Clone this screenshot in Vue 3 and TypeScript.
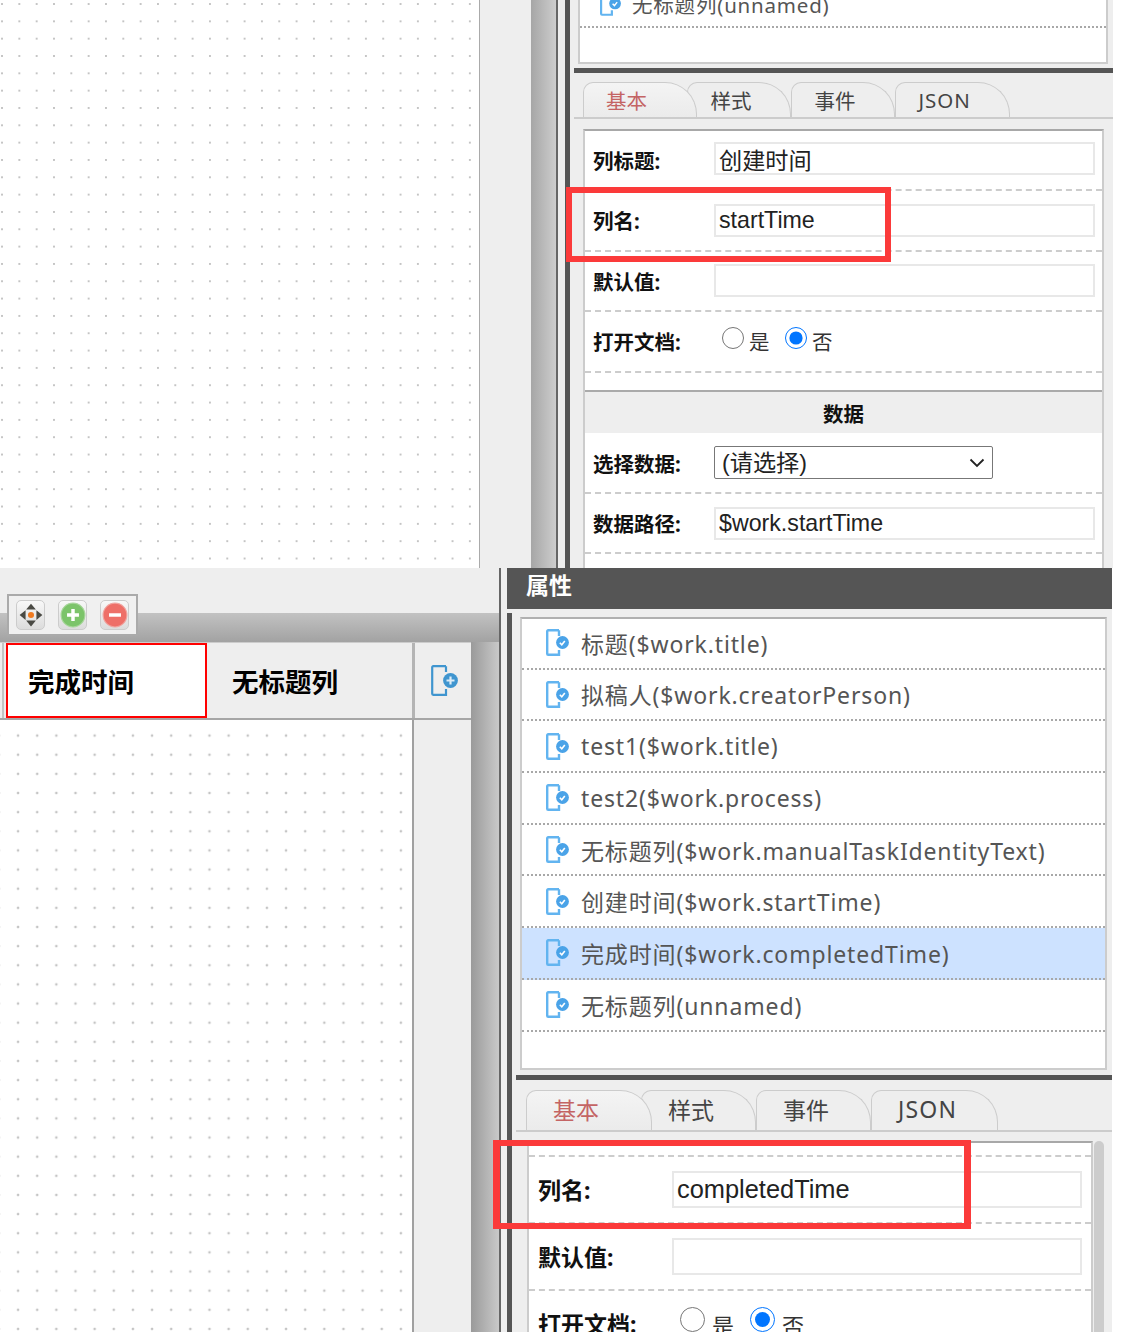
<script setup lang="ts">
const topRows = ['标题($work.title)', '拟稿人($work.creatorPerson)', 'test1($work.title)', 'test2($work.process)', '无标题列($work.manualTaskIdentityText)', '创建时间($work.startTime)', '完成时间($work.completedTime)', '无标题列(unnamed)']
const selectedRow = 6
const tabs = ['基本', '样式', '事件', 'JSON']
</script>

<template>
  <div class="page">
    <section class="a">
      <div class="a-canvas"></div>
      <div class="a-gap"></div>
      <div class="a-shade"></div>
      <div class="a-strip"></div>
      <div class="a-vbar"></div>
      <div class="a-main">
        <div class="list">
          <div class="item first">
            <svg class="doc" viewBox="0 0 23 27"><path d="M13 1.2H2.2a1 1 0 0 0-1 1V24.8a1 1 0 0 0 1 1H13V21M13 1.2V7" fill="none" stroke="#62b4f0" stroke-width="2.4"/><circle cx="16.5" cy="13.5" r="6.4" fill="#4aa3e8"/><path d="M13.8 13.8l2 2 3-3.8" fill="none" stroke="#fff" stroke-width="1.6"/></svg>
            <span>无标题列(unnamed)</span>
          </div>
        </div>
        <div class="bar"></div>
        <div class="tabs">
          <div v-for="(t, i) in tabs" :key="t" class="tab" :class="{ on: i === 0 }" :style="{ zIndex: 9 - i }">{{ t }}</div>
        </div>
        <div class="form">
          <div class="row"><label>列标题:</label><input value="创建时间" readonly /></div>
          <div class="row"><label>列名:</label><input value="startTime" readonly /></div>
          <div class="row"><label>默认值:</label><input value="" readonly /></div>
          <div class="row">
            <label>打开文档:</label>
            <div class="radios">
              <input type="radio" name="a-open" /><span>是</span>
              <input type="radio" name="a-open" checked /><span>否</span>
            </div>
          </div>
          <div class="head">数据</div>
          <div class="row">
            <label>选择数据:</label>
            <div class="sel-wrap">
              <select><option>(请选择)</option></select>
              <svg class="chev" viewBox="0 0 16 10" width="16" height="10"><path d="M1.5 1.5L8 8l6.5-6.5" fill="none" stroke="#222" stroke-width="1.8"/></svg>
            </div>
          </div>
          <div class="row"><label>数据路径:</label><input value="$work.startTime" readonly /></div>
        </div>
      </div>
      <div class="mark mark-a"></div>
    </section>

    <section class="b">
      <div class="b-left">
        <div class="b-band"></div>
        <div class="b-stage">
          <div class="panel">
            <div class="p-tabs">
              <div class="p-stub"></div>
              <div class="p-cell sel">完成时间</div>
              <div class="p-cell">无标题列</div>
              <div class="p-add">
                <svg viewBox="0 0 27 31" width="27" height="31"><path d="M15 1.2H2.2a1 1 0 0 0-1 1V28.8a1 1 0 0 0 1 1H15V24M15 1.2V7" fill="none" stroke="#3f95cf" stroke-width="2.2"/><circle cx="19.5" cy="15.5" r="7.4" fill="#3f95cf"/><path d="M15.5 15.5h8M19.5 11.5v8" stroke="#dcecf7" stroke-width="2.2"/></svg>
              </div>
            </div>
            <div class="p-body">
              <div class="p-canvas"></div>
              <div class="p-side"></div>
            </div>
          </div>
          <div class="b-shade"></div>
        </div>
        <div class="tools">
          <button class="tool">
            <svg viewBox="0 0 24 24" width="26" height="26"><path d="M12 1.5l4.5 5.5h-9zM12 22.5L7.500 17h9zM1.500 12L7 7.500v9zM22.500 12L17 16.500v-9z" fill="#4a4a44"/><circle cx="12" cy="12" r="2.8" fill="#f07a20"/></svg>
          </button>
          <button class="tool">
            <svg viewBox="0 0 24 24" width="26" height="26"><circle cx="12" cy="12" r="11" fill="#7cc46a" stroke="#a8d69b"/><path d="M12 6.500v11M6.500 12h11" stroke="#fff" stroke-width="3.200"/></svg>
          </button>
          <button class="tool">
            <svg viewBox="0 0 24 24" width="26" height="26"><circle cx="12" cy="12" r="11" fill="#ee6f68" stroke="#f0a5a0"/><path d="M6.500 12h11" stroke="#fff" stroke-width="3.200"/></svg>
          </button>
        </div>
      </div>
      <div class="b-right">
        <div class="title">属性</div>
        <div class="b-under">
          <div class="b-vbar"></div>
          <div class="b-main">
            <div class="list">
              <div v-for="(r, i) in topRows" :key="r" class="item" :class="{ cur: i === selectedRow }">
                <svg class="doc" viewBox="0 0 23 27"><path d="M13 1.2H2.2a1 1 0 0 0-1 1V24.8a1 1 0 0 0 1 1H13V21M13 1.2V7" fill="none" stroke="#62b4f0" stroke-width="2.4"/><circle cx="16.5" cy="13.5" r="6.4" fill="#4aa3e8"/><path d="M13.8 13.8l2 2 3-3.8" fill="none" stroke="#fff" stroke-width="1.6"/></svg>
                <span>{{ r }}</span>
              </div>
            </div>
            <div class="bar"></div>
            <div class="tabs">
              <div v-for="(t, i) in tabs" :key="t" class="tab" :class="{ on: i === 0 }" :style="{ zIndex: 9 - i }">{{ t }}</div>
            </div>
            <div class="form-wrap">
              <div class="form">
                <div class="row stub"></div>
                <div class="row"><label>列名:</label><input value="completedTime" readonly /></div>
                <div class="row"><label>默认值:</label><input value="" readonly /></div>
                <div class="row">
                  <label>打开文档:</label>
                  <div class="radios">
                    <input type="radio" name="b-open" /><span>是</span>
                    <input type="radio" name="b-open" checked /><span>否</span>
                  </div>
                </div>
              </div>
              <div class="scroll"></div>
            </div>
          </div>
        </div>
      </div>
      <div class="mark mark-b"></div>
    </section>
  </div>
</template>

<style scoped>
.page {
  width: 1125px;
  height: 1332px;
  overflow: hidden;
  background: #fff;
  font-family: "Noto Sans", "Noto Sans CJK SC", sans-serif;
  color: #222;
}
section { position: relative; display: flex; overflow: hidden; }
.a { height: 568px; }
.b { height: 764px; }

/* top shot */
.a-canvas {
  width: 479px;
  flex: none;
  border-right: 1.5px solid #aaa;
  background-color: #fff;
  background-image: radial-gradient(circle, #c4c4c4 0 1.1px, transparent 1.5px);
  background-size: 17.33px 17.33px;
  background-position: -6.67px -4.67px;
}
.a-gap { width: 51px; flex: none; background: #eee; }
.a-shade { width: 25px; flex: none; background: linear-gradient(90deg, #a6a6a6, #cdcdcd); border-right: 2px solid #666; }
.a-strip { width: 7px; flex: none; background: #eee; }
.a-vbar { width: 5px; flex: none; background: #555; }
.a-main { width: 542.5px; flex: none; background: #eee; }
.a-main .list { margin-left: 8px; width: 530px; height: 64px; border-top: 0; }
.a-main .item { height: 46.6px; margin-top: -18.6px; padding-left: 20px; font-size: 20.5px; letter-spacing: 0.8px; }
.a-main .doc { width: 21px; height: 25px; margin-right: 11px; }
.a-main .bar { margin: 4px 0 0 4px; height: 5px; }
.a-main .tabs { margin-left: 4px; height: 44px; padding-left: 9px; }
.a-main .tab { width: 114px; height: 35px; font-size: 20.5px; padding-left: 22px; margin-right: -10.5px; }
.a-main .tab:nth-child(n + 2) { width: 104px; padding-left: 23px; margin-right: 0; }
.a-main .tab:last-child { width: 115px; letter-spacing: 1px; }
.a-main .form { margin: 9.500px 0 0 13px; width: 521px; height: 440px; }
.a-main .row { height: 60.6px; padding-left: 8px; }
.a-main .row:first-child { height: 60.5px; }
.a-main .row:first-child input { margin-top: -2px; }
.a-main label { width: 121px; font-size: 20.5px; }
.a-main input:not([type]) { width: 381px; height: 33px; font-size: 23.2px; }
.a-main .head { height: 43.5px; margin-top: 17px; font-size: 20.5px; }
.a-main select { width: 279px; height: 33px; font-size: 23.2px; }
.a-main .radios input { width: 22px; height: 22px; margin: -6px 5px 0 8px; }
.a-main .radios span { font-size: 20.5px; width: 28px; }

.bar { background: #555; }
.list {
  background: #fff;
  border: 2px solid #ccc;
  box-sizing: border-box;
  overflow: hidden;
}
.item {
  display: flex;
  align-items: center;
  box-sizing: border-box;
  border-bottom: 2px dotted #a8a8a8;
  color: #555;
  white-space: nowrap;
}
.item.cur { background: #cde2ff; }
.doc { flex: none; }
.tabs {
  display: flex;
  align-items: flex-end;
  box-sizing: content-box;
  border-bottom: 2px solid #ccc;
  overflow: hidden;
}
.tab {
  position: relative;
  box-sizing: border-box;
  display: flex;
  align-items: center;
  flex: none;
  background: #eee;
  color: #444;
  border: 1.5px solid #ccc;
  border-bottom: 0;
  border-radius: 10px 32px 0 0 / 10px 32px 0 0;
}
.tab.on { color: #c46464; background: linear-gradient(#f4f4f4, #ebebeb); }

.form {
  background: #fff;
  box-sizing: border-box;
  border: 2px solid #ccc;
  border-top-color: #a8a8a8;
  border-bottom: 0;
  overflow: hidden;
}
.row {
  display: flex;
  align-items: center;
  box-sizing: border-box;
  border-bottom: 2px dashed #ccc;
}
label { flex: none; font-weight: 700; color: #111; }
.form input:not([type]) {
  box-sizing: border-box;
  border: 2px solid #e8e8e8;
  background: #fff;
  padding: 0 3px;
  margin: 0;
  outline: 0;
  color: #222;
  font-family: "Liberation Sans", "Noto Sans CJK SC", sans-serif;
}
.sel-wrap { position: relative; display: flex; }
select {
  appearance: none;
  box-sizing: border-box;
  border: 1.5px solid #777;
  border-radius: 2px;
  background: #fff;
  color: #222;
  padding: 0 7px;
  font-family: "Liberation Sans", "Noto Sans CJK SC", sans-serif;
}
.chev { position: absolute; right: 8px; top: 12px; pointer-events: none; }
.radios { display: flex; align-items: center; }
.radios span { flex: none; color: #333; }
.head {
  box-sizing: border-box;
  display: flex;
  align-items: center;
  justify-content: center;
  background: #eee;
  border-top: 2px solid #aaa;
  font-weight: 700;
  color: #111;
}

.mark {
  position: absolute;
  box-sizing: border-box;
  border: 6px solid #fb3a3a;
  pointer-events: none;
}
.mark-a { left: 566px; top: 187px; width: 325px; height: 75px; }
.mark-b { left: 493px; top: 572px; width: 478px; height: 89px; border-width: 6px 7px; }

/* bottom shot */
.b-left { position: relative; width: 499px; border-right: 2px solid #666; display: flex; flex-direction: column; flex: none; }
.b-band { height: 45px; background: #eee; flex: none; }
.b-stage {
  flex: 1;
  display: flex;
  padding-top: 29px;
  background: linear-gradient(#c2c2c2, #a2a2a2 29px, #a2a2a2);
  min-height: 0;
}
.panel { width: 471px; flex: none; display: flex; flex-direction: column; }
.b-shade { flex: 1; margin-top: -29px; background: linear-gradient(90deg, #9a9a9a, #c9c9c9); clip-path: inset(29px 0 0 0); }
.p-tabs { display: flex; height: 78px; box-sizing: border-box; background: #eee; border-bottom: 2px solid #a6a6a6; border-top: 1px solid #ccc; flex: none; }
.p-stub { width: 2px; border-right: 2px solid #c4c4c4; margin-right: 2px; }
.p-cell {
  box-sizing: border-box;
  width: 205px;
  display: flex;
  align-items: center;
  padding-left: 25px;
  font-size: 26.5px;
  font-weight: 700;
  color: #000;
}
.p-cell.sel { width: 201px; padding-left: 20px; background: #fff; border: 2px solid #f00; }
.p-add { flex: 1; display: flex; align-items: center; padding-left: 16px; border-left: 3px solid #b4b4b4; }
.p-body { flex: 1; display: flex; min-height: 0; }
.p-canvas {
  width: 411.5px;
  flex: none;
  background-color: #fff;
  background-image: radial-gradient(circle, #c4c4c4 0 1.2px, transparent 1.6px);
  background-size: 19.15px 19.15px;
  background-position: 8.5px 6px;
  border-right: 2px solid #a0a0a0;
}
.p-side { flex: 1; background: #eee; }
.tools {
  position: absolute;
  left: 7px;
  top: 26px;
  width: 131px;
  height: 42px;
  box-sizing: border-box;
  display: flex;
  gap: 13px;
  align-items: center;
  padding-left: 7px;
  background: #f0f0f0;
  border: 2px solid #aaa;
}
.tool {
  width: 29px;
  height: 30px;
  padding: 0;
  display: flex;
  align-items: center;
  justify-content: center;
  border: 1px solid #ccc;
  border-radius: 5px;
  background: linear-gradient(#f8f8f8, #dcdcdc);
}

.b-right { width: 611px; padding-left: 6px; box-sizing: border-box; flex: none; display: flex; flex-direction: column; background: #eee; }
.title {
  flex: none;
  height: 41px;
  margin-bottom: 4px;
  padding: 0 0 9px 19px;
  box-sizing: border-box;
  display: flex;
  align-items: center;
  background: #555;
  color: #fff;
  font-size: 23px;
  font-weight: 700;
}
.b-under { flex: 1; display: flex; min-height: 0; }
.b-vbar { width: 5px; flex: none; background: #555; }
.b-main { flex: 1; min-width: 0; display: flex; flex-direction: column; }
.b-main .list { flex: none; margin: 4px 0 0 8px; width: 587px; height: 453px; border-top-color: #b0b0b0; }
.b-main .item { height: 51.72px; padding-left: 24px; font-size: 23px; letter-spacing: 0.86px; }
.b-main .item:first-child { margin-top: -1.2px; }
.b-main .doc { width: 23px; height: 27px; margin-right: 12px; }
.b-main .bar { flex: none; margin: 5px 0 0 4px; height: 5px; }
.b-main .tabs { flex: none; margin-left: 4px; height: 50px; padding-left: 10px; }
.b-main .tab { width: 126px; height: 40px; font-size: 23px; padding: 0 0 3px 26px; margin-right: -11px; }
.b-main .tab:nth-child(n + 2) { width: 115px; padding-left: 26px; margin-right: 0; }
.b-main .tab:last-child { width: 127px; letter-spacing: 1.2px; }
.form-wrap { flex: 1; display: flex; margin: 9px 0 0 15px; min-height: 0; }
.form-wrap .form { width: 566px; flex: none; }
.form-wrap .row { height: 67px; padding-left: 9px; }
.form-wrap .row.stub { height: 14px; }
.form-wrap label { width: 134px; font-size: 23px; padding-bottom: 2px; }
.form-wrap input:not([type]) { width: 410px; height: 37px; font-size: 25.4px; }
.form-wrap .radios input { width: 25px; height: 25px; margin: -8px 7px 0 8px; }
.form-wrap .radios span { font-size: 22px; width: 22px; margin-right: 8px; }
.scroll { width: 10px; margin-left: 1px; background: #ccc; border-radius: 5px 5px 0 0; }
</style>
